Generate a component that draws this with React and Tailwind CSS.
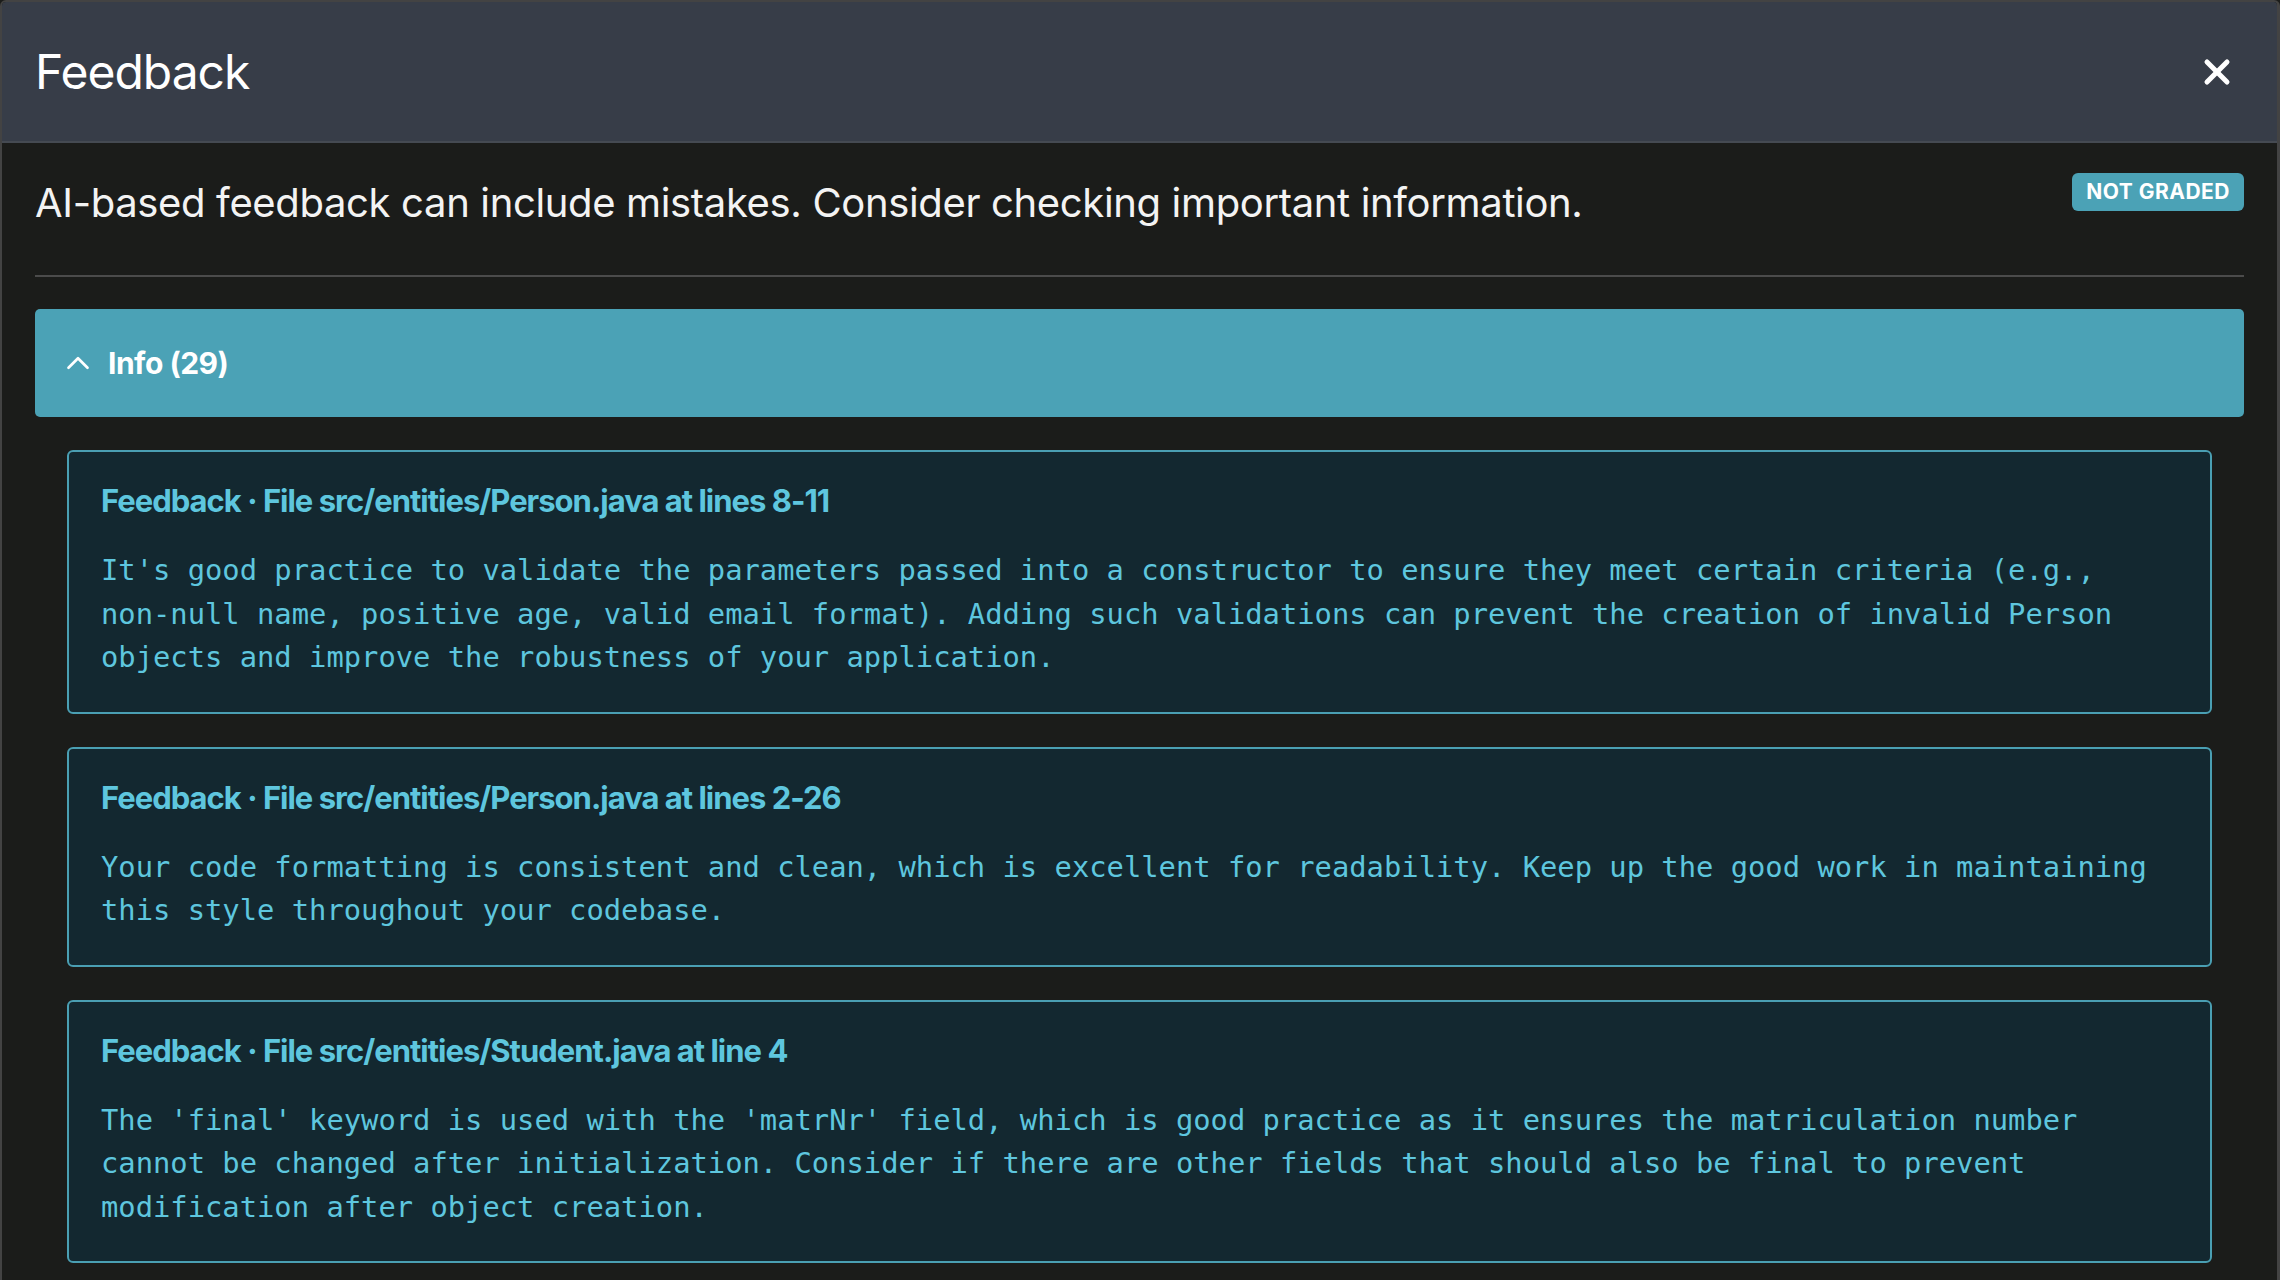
import { X, ChevronUp } from "lucide-react";

const items = [
  {
    title: "Feedback · File src/entities/Person.java at lines 8-11",
    text: "It's good practice to validate the parameters passed into a constructor to ensure they meet certain criteria (e.g., non-null name, positive age, valid email format). Adding such validations can prevent the creation of invalid Person objects and improve the robustness of your application.",
  },
  {
    title: "Feedback · File src/entities/Person.java at lines 2-26",
    text: "Your code formatting is consistent and clean, which is excellent for readability. Keep up the good work in maintaining this style throughout your codebase.",
  },
  {
    title: "Feedback · File src/entities/Student.java at line 4",
    text: "The 'final' keyword is used with the 'matrNr' field, which is good practice as it ensures the matriculation number cannot be changed after initialization. Consider if there are other fields that should also be final to prevent modification after object creation.",
  },
];

export default function App() {
  return (
    <div className="h-[1280px] w-[2280px] overflow-hidden bg-[#1b1c1a] font-['Inter',sans-serif]">
      <div className="h-[1320px] border-[2px] border-r-[3px] border-[#434343] rounded-t-[6px] overflow-hidden">
        {/* Header */}
        <div className="flex h-[141px] items-center justify-between bg-[#373d48] border-b-[2px] border-[#454a52] pl-[33px] pr-[40px]">
          <h1 className="text-[48px] leading-none tracking-[-1px] text-white">Feedback</h1>
          <button className="text-white">
            <X className="h-[40px] w-[40px]" strokeWidth={3} />
          </button>
        </div>

        {/* Body */}
        <div className="px-[33px] pt-[36px]">
          <div className="flex items-start justify-between">
            <h5 className="text-[40px] leading-[48px] tracking-[-0.35px] text-[#f3f3f3]">
              AI-based feedback can include mistakes. Consider checking important information.
            </h5>
            <span className="mt-[-6px] rounded-[6px] bg-[#4ba2b6] px-[14px] py-[7px] text-[21px] font-bold leading-[24px] tracking-[0.5px] text-white">
              NOT GRADED
            </span>
          </div>

          <hr className="mt-[48px] border-t-[2px] border-[#4b4b4b]" />

          <div className="mt-[32px] flex h-[108px] items-center gap-[11px] rounded-[5px] bg-[#4ba2b6] pl-[24px] pr-[32px] text-white">
            <ChevronUp className="h-[38px] w-[38px]" strokeWidth={1.7} />
            <span className="text-[30px] font-bold tracking-[-0.5px]">Info (29)</span>
          </div>

          <div className="flex flex-col gap-[33px] px-[32px] pt-[33px]">
            {items.map((item) => (
              <div
                key={item.title}
                className="rounded-[6px] border-[2px] border-[#4a9fb3] bg-[#132830] px-[32px] pt-[30px] pb-[32px] text-[#5ec6de]"
              >
                <div className="text-[31px] font-bold leading-[38px] tracking-[-1px]">
                  {item.title}
                </div>
                <p className="mt-[29px] font-['DejaVu_Sans_Mono',monospace] text-[28.8px] leading-[43.5px]">
                  {item.text}
                </p>
              </div>
            ))}
          </div>
        </div>
      </div>
    </div>
  );
}
